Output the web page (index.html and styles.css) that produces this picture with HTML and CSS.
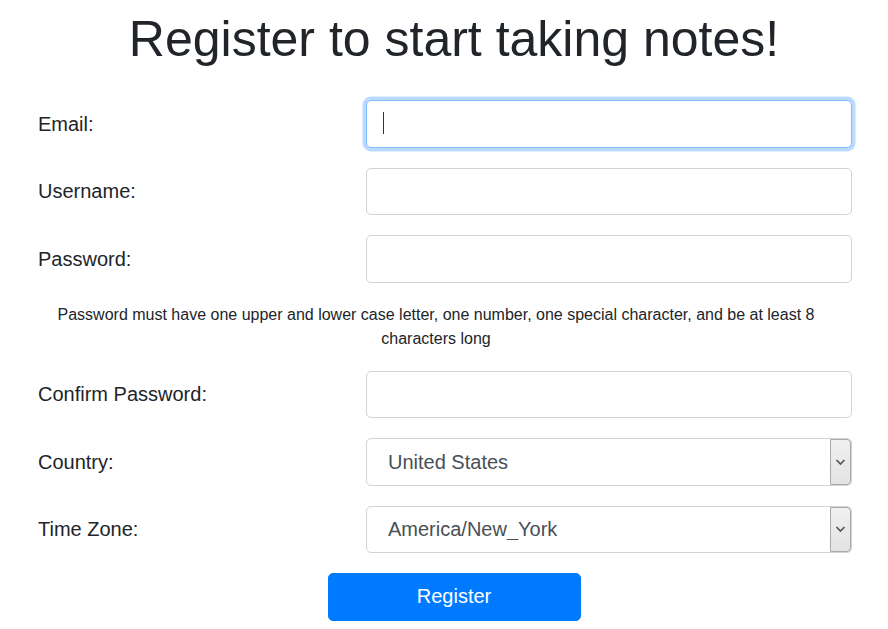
FILE: index.html
```html
<!DOCTYPE html>
<html lang="en">
<head>
<meta charset="utf-8">
<title>Register</title>
<link rel="stylesheet" href="styles.css">
</head>
<body>
<main class="page">
  <h1 class="title">Register to start taking notes!</h1>
  <form class="form">
    <label class="label" for="email">Email:</label>
    <div class="field">
      <input class="control is-focused" id="email" type="email">
      <span class="caret"></span>
    </div>

    <label class="label" for="username">Username:</label>
    <div class="field"><input class="control" id="username" type="text"></div>

    <label class="label" for="password">Password:</label>
    <div class="field"><input class="control" id="password" type="password"></div>

    <p class="hint">Password must have one upper and lower case letter, one number, one special character, and be at least 8 characters long</p>

    <label class="label" for="confirm">Confirm Password:</label>
    <div class="field"><input class="control" id="confirm" type="password"></div>

    <label class="label" for="country">Country:</label>
    <div class="field">
      <select class="control select" id="country">
        <option>United States</option>
      </select>
      <span class="arrow"><svg width="11" height="8" viewBox="0 0 11 8"><path d="M1.5 2 L5.5 6 L9.5 2" fill="none" stroke="#555" stroke-width="1.7"/></svg></span>
    </div>

    <label class="label" for="tz">Time Zone:</label>
    <div class="field">
      <select class="control select" id="tz">
        <option>America/New_York</option>
      </select>
      <span class="arrow"><svg width="11" height="8" viewBox="0 0 11 8"><path d="M1.5 2 L5.5 6 L9.5 2" fill="none" stroke="#555" stroke-width="1.7"/></svg></span>
    </div>
  </form>
  <button class="btn" type="button">Register</button>
</main>
</body>
</html>
```
FILE: styles.css
```css
html, body {
  background: #fff;
}
body {
  margin: 8px;
  font-family: "Liberation Sans", Arial, sans-serif;
  color: #212529;
}
.page {
  padding-left: 20px;
  display: flex;
  flex-direction: column;
  align-items: center;
}
.title {
  margin: 1px 0 31px;
  font-size: 50px;
  font-weight: 400;
  line-height: 60px;
  text-align: center;
}
.form {
  align-self: flex-start;
  margin-left: 10px;
  display: grid;
  grid-template-columns: 328px 486px;
  row-gap: 20px;
  align-items: center;
}
.label {
  font-size: 20px;
  line-height: 24px;
}
.field {
  position: relative;
}
.control {
  box-sizing: border-box;
  display: block;
  width: 100%;
  height: 47.5px;
  padding: 0 16px;
  font-family: "Liberation Sans", Arial, sans-serif;
  font-size: 20px;
  color: #495057;
  background: #fff;
  border: 1px solid #ced4da;
  border-radius: 5px;
  outline: none;
}
.control.is-focused {
  border-color: #80bdff;
  box-shadow: 0 0 0 3.5px rgba(0, 123, 255, 0.27);
}
.caret {
  position: absolute;
  left: 17px;
  top: 12px;
  width: 1px;
  height: 22px;
  background: #333;
}
.select {
  -webkit-appearance: none;
  appearance: none;
  padding-left: 21px;
}
.arrow {
  position: absolute;
  top: 1px;
  right: 1px;
  bottom: 1px;
  width: 21px;
  box-sizing: border-box;
  display: flex;
  align-items: center;
  justify-content: center;
  background: linear-gradient(#f0f0f0, #e3e3e3);
  border: 1px solid #a9a9a9;
  border-radius: 0 4px 4px 0;
}
.hint {
  grid-column: 1 / -1;
  margin: 0;
  padding-right: 18px;
  font-size: 16px;
  line-height: 24px;
  text-align: center;
}
.btn {
  margin-top: 20px;
  width: 253px;
  height: 47.5px;
  font-family: "Liberation Sans", Arial, sans-serif;
  font-size: 20px;
  color: #fff;
  background: #007bff;
  border: 1px solid #007bff;
  border-radius: 5px;
}
```
